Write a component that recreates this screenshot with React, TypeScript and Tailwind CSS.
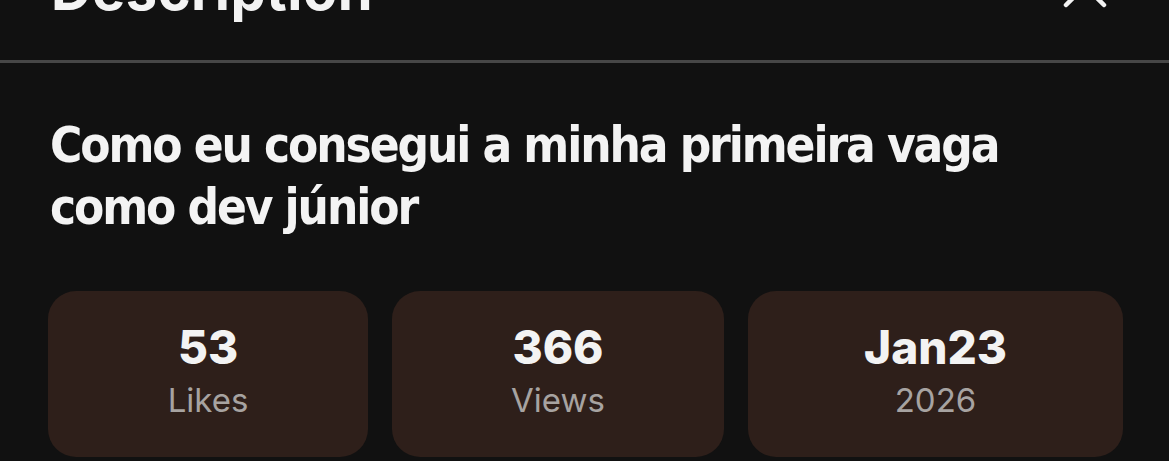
import React from "react";

const stats = [
  { value: "53", label: "Likes", width: "w-[320px]" },
  { value: "366", label: "Views", width: "w-[332px]" },
  { value: "Jan23", label: "2026", width: "w-[375px]" },
];

const App = () => {
  return (
    <main className="h-[461px] w-full overflow-hidden bg-[#111111] font-['Inter',sans-serif] text-[#f3f3f3]">
      <header className="flex h-[63px] items-start justify-between border-b-[3px] border-[#474747] pl-[51px] pr-[62px]">
        <h2 className="-mt-[42px] text-[56px] leading-[64px] font-bold tracking-[0.5px]">Description</h2>
        <svg
          className="-mt-[36px]"
          width="44"
          height="44"
          viewBox="0 0 44 44"
          fill="none"
          stroke="#f3f3f3"
          strokeWidth="4.5"
          strokeLinecap="round"
        >
          <path d="M3 3L41 41M41 3L3 41" />
        </svg>
      </header>

      <h1 className="mt-[52px] max-w-[1010px] pl-[50px] font-['DejaVu_Sans_Condensed','Open_Sans',sans-serif] text-[49px] leading-[62px] font-bold tracking-[-2.1px]">
        Como eu consegui a minha primeira vaga como dev júnior
      </h1>

      <div className="mt-[52px] flex gap-6 pl-[48px]">
        {stats.map((s) => (
          <div
            key={s.label}
            className={`${s.width} flex h-[166px] flex-col items-center rounded-[28px] bg-[#2e1f1a] pt-[31px]`}
          >
            <p className="text-[46px] leading-[50px] font-extrabold">{s.value}</p>
            <p className="mt-[10px] text-[33px] leading-[36px] text-[#a7a3a1]">{s.label}</p>
          </div>
        ))}
      </div>
    </main>
  );
};

export default App;
